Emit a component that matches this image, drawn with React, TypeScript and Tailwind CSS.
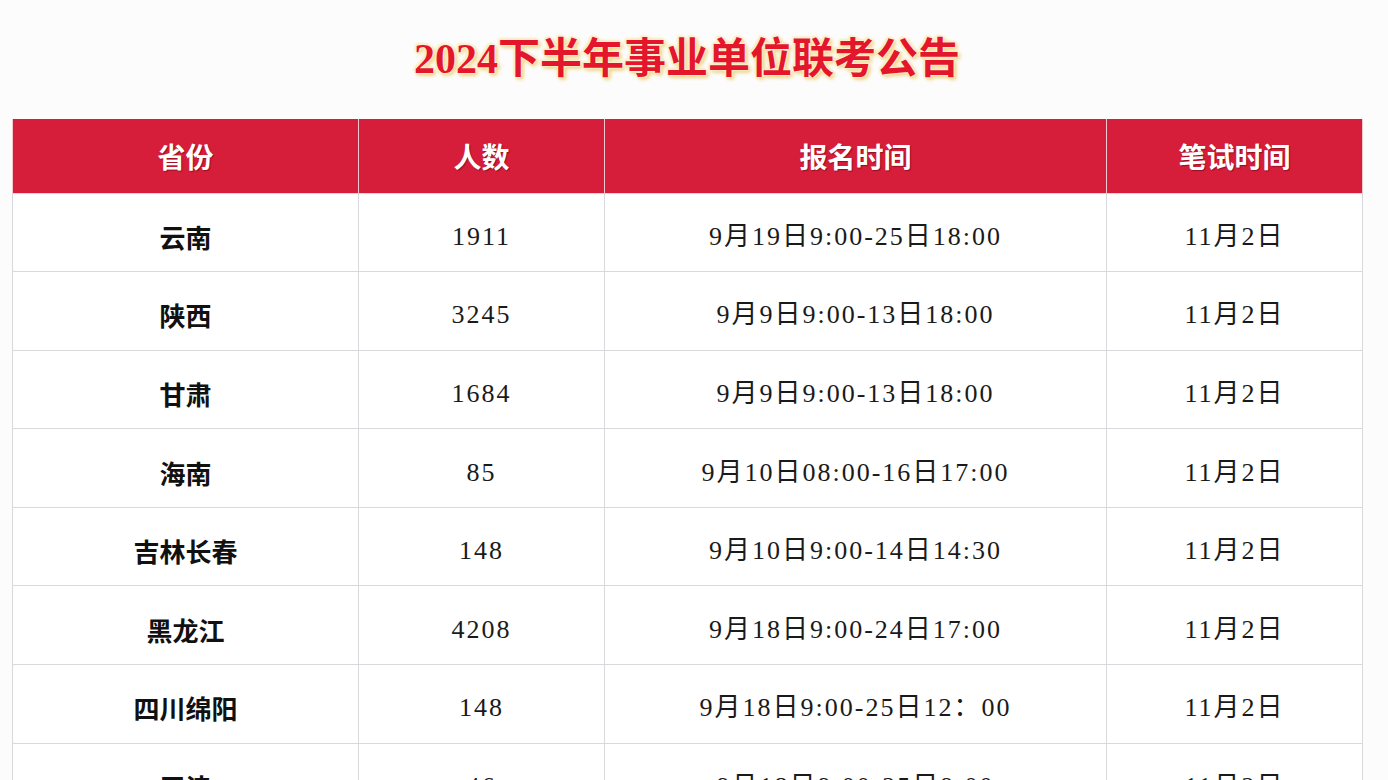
import React from 'react'

const rows = [
  ['云南', '1911', '9月19日9:00-25日18:00', '11月2日'],
  ['陕西', '3245', '9月9日9:00-13日18:00', '11月2日'],
  ['甘肃', '1684', '9月9日9:00-13日18:00', '11月2日'],
  ['海南', '85', '9月10日08:00-16日17:00', '11月2日'],
  ['吉林长春', '148', '9月10日9:00-14日14:30', '11月2日'],
  ['黑龙江', '4208', '9月18日9:00-24日17:00', '11月2日'],
  ['四川绵阳', '148', '9月18日9:00-25日12：00', '11月2日'],
  ['天津', '46', '9月18日9:00-25日9:00', '11月2日'],
]

const heads = ['省份', '人数', '报名时间', '笔试时间']

export default function App() {
  return (
    <div className="h-[780px] overflow-hidden bg-[#fcfcfd] px-3 pt-[20px]">
      {/* Title */}
      <h1 className="mb-[25px] pr-[14px] text-center text-[42px] font-bold leading-[70px] text-[#e3162c] [font-family:'Noto_Sans_CJK_SC',sans-serif] [text-shadow:0_0_2px_#fff,0_0_3px_#fff,1px_1px_3px_#f3d67a,-1px_-1px_3px_#f3d67a,2px_2px_4px_#e9c85a]">
        <span className="[font-family:'Liberation_Serif',serif]">2024</span>下半年事业单位联考公告
      </h1>

      {/* Table */}
      <table className="w-[1350px] table-fixed border-collapse">
        <colgroup>
          <col className="w-[346px]" />
          <col className="w-[246px]" />
          <col className="w-[502px]" />
          <col className="w-[256px]" />
        </colgroup>
        <thead>
          <tr className="h-[74px] bg-[#d61d3a]">
            {heads.map((h) => (
              <th
                key={h}
                className="border-x border-[#f2c7cf] text-center text-[28px] font-bold text-white [font-family:'Noto_Sans_CJK_SC',sans-serif] [text-shadow:1px_1px_1px_rgba(90,0,10,0.5)]"
              >
                {h}
              </th>
            ))}
          </tr>
        </thead>
        <tbody>
          {rows.map((r, i) => (
            <tr key={i} className="h-[78.6px] bg-white">
              <td className="border border-[#d9d9dd] pt-2 text-center text-[26px] font-bold text-[#111] [font-family:'Noto_Sans_CJK_SC',sans-serif]">
                {r[0]}
              </td>
              {r.slice(1).map((c, j) => (
                <td
                  key={j}
                  className="border border-[#d9d9dd] pt-2 text-center text-[26px] tracking-[2px] text-[#1a1a1a] [font-family:'Liberation_Serif','Noto_Sans_CJK_SC',serif]"
                >
                  {c}
                </td>
              ))}
            </tr>
          ))}
        </tbody>
      </table>
    </div>
  )
}
